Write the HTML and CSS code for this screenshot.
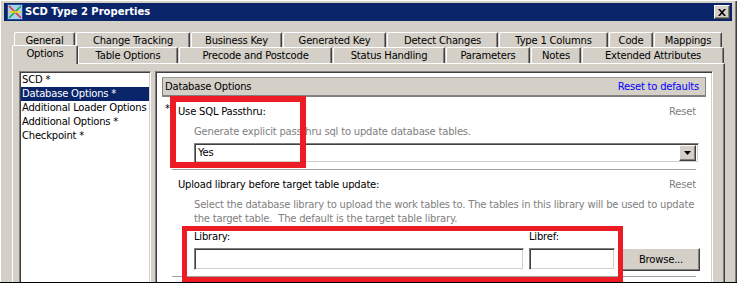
FILE: index.html
```html
<!DOCTYPE html>
<html lang="en">
  <head>
    <meta charset="UTF-8" />
    <title>SCD Type 2 Properties</title>
    <link rel="stylesheet" href="styles.css">
  </head>
  <body>
    <div class="window">
      <div class="titlebar">
        <svg class="app-icon" viewBox="0 0 16 16">
          <rect x="0.5" y="0.5" width="15" height="15" fill="#a8cff2" stroke="#1d4f9c" />
          <path d="M2 2 L14 14" stroke="#e0352a" stroke-width="1.6" />
          <path d="M2 14 L14 2" stroke="#1fa848" stroke-width="1.6" />
          <path d="M1.5 8 H14.5" stroke="#f2d21c" stroke-width="1.6" />
        </svg>
        <span class="title">SCD Type 2 Properties</span>
        <span class="close">
          <svg viewBox="0 0 8 7" width="8" height="7">
            <path d="M0 0 H2 L4 2.3 L6 0 H8 L5 3.5 L8 7 H6 L4 4.7 L2 7 H0 L3 3.5 Z" fill="#000" />
          </svg>
        </span>
      </div>

      <div class="tabs">
        <div class="tab-row back">
          <div class="tab" style="width: 61px">General</div>
          <div class="tab" style="width: 114px">Change Tracking</div>
          <div class="tab" style="width: 91px">Business Key</div>
          <div class="tab" style="width: 103px">Generated Key</div>
          <div class="tab" style="width: 111px">Detect Changes</div>
          <div class="tab" style="width: 109px">Type 1 Columns</div>
          <div class="tab" style="width: 44px">Code</div>
          <div class="tab" style="width: 68px">Mappings</div>
        </div>
        <div class="tab-row front">
          <div class="tab sel" style="width: 66px">Options</div>
          <div class="tab" style="width: 100px">Table Options</div>
          <div class="tab" style="width: 153px">Precode and Postcode</div>
          <div class="tab" style="width: 112px">Status Handling</div>
          <div class="tab" style="width: 84px">Parameters</div>
          <div class="tab" style="width: 50px">Notes</div>
          <div class="tab" style="width: 142px">Extended Attributes</div>
        </div>
      </div>

      <div class="panel">
        <ul class="nav-list">
          <li>SCD *</li>
          <li class="active">Database Options *</li>
          <li>Additional Loader Options</li>
          <li>Additional Options *</li>
          <li>Checkpoint *</li>
        </ul>

        <div class="content">
          <div class="section-head">
            <span>Database Options</span>
            <span class="link">Reset to defaults</span>
          </div>

          <div class="option first">
            <div class="opt-head">
              <span class="req">*</span>
              <span class="opt-name">Use SQL Passthru:</span>
              <span class="reset">Reset</span>
            </div>
            <div class="desc">Generate explicit passthru sql to update database tables.</div>
            <div class="combo">
              <span class="combo-value">Yes</span>
              <span class="combo-btn">
                <svg viewBox="0 0 7 4" width="7" height="4"><path d="M0 0 H7 L3.5 4 Z" fill="#000" /></svg>
              </span>
            </div>
          </div>
          <div class="sep"></div>

          <div class="option">
            <div class="opt-head">
              <span class="req"></span>
              <span class="opt-name">Upload library before target table update:</span>
              <span class="reset">Reset</span>
            </div>
            <div class="desc">Select the database library to upload the work tables to. The tables in this library will be used to update<br>the target table.&nbsp; The default is the target table library.</div>
            <div class="lib-row">
              <label class="field lib">
                <span>Library:</span>
                <span class="input"></span>
              </label>
              <label class="field libref">
                <span>Libref:</span>
                <span class="input"></span>
              </label>
              <span class="btn">Browse...</span>
            </div>
          </div>
          <div class="sep"></div>
        </div>
      </div>

      <div class="mark mark-1"></div>
      <div class="mark mark-2"></div>
    </div>
  </body>
</html>
```

FILE: styles.css
```css
:root {
  --face: #d4d0c8;
  --shadow: #808080;
  --dark: #404040;
  --navy: #0a246a;
  --mark: #ed1c24;
}
body {
  margin: 0;
  width: 737px;
  height: 283px;
  overflow: hidden;
  background: var(--face);
  font-family: "DejaVu Sans", sans-serif;
  font-size: 10px;
  line-height: 14px;
  letter-spacing: -0.2px;
  color: #000;
}
.window {
  position: relative;
  height: 283px;
  box-sizing: border-box;
  padding: 3px 5px 0 4px;
  border-bottom: 1px solid #000;
  box-shadow: inset 1px 1px #fff, inset -1px 0 var(--dark), inset -2px 0 var(--shadow);
  overflow: hidden;
}

/* title bar */
.titlebar {
  display: flex;
  align-items: center;
  height: 18px;
  padding: 0 2px 0 3px;
  background: var(--navy);
  color: #fff;
}
.app-icon {
  width: 16px;
  height: 16px;
  margin-right: 2px;
}
.title {
  flex: 1;
  font-weight: bold;
  letter-spacing: 0;
}
.close {
  display: flex;
  align-items: center;
  justify-content: center;
  width: 16px;
  height: 14px;
  box-sizing: border-box;
  background: var(--face);
  border: 1px solid;
  border-color: #fff var(--dark) var(--dark) #fff;
  box-shadow: inset -1px -1px var(--shadow);
}

/* tabs */
.tabs {
  margin: 11px 0 0 8px;
}
.tab-row {
  display: flex;
}
.tab-row.back {
  height: 15px;
  padding-left: 2px;
}
.tab-row.front {
  height: 16px;
  align-items: flex-end;
}
.tab {
  flex: none;
  box-sizing: border-box;
  height: 16px;
  margin-right: 1px;
  background: var(--face);
  border: 1px solid #fff;
  border-right-color: var(--dark);
  border-bottom: none;
  border-radius: 2px 2px 0 0;
  box-shadow: inset -1px 0 var(--shadow);
  text-align: center;
  line-height: 15px;
  white-space: nowrap;
}
.tab-row.back .tab {
  height: 15px;
  padding-top: 1px;
  line-height: 14px;
}
.tab.sel {
  position: relative;
  z-index: 1;
  height: 19px;
  margin-right: 0;
  margin-bottom: -1px;
}

/* panel */
.panel {
  display: flex;
  gap: 4px;
  width: 713px;
  height: 230px;
  margin-left: 8px;
  box-sizing: border-box;
  padding: 7px 11px 0 6px;
  border: 1px solid #fff;
  border-right-color: var(--dark);
  border-bottom: none;
  box-shadow: inset -1px 0 var(--shadow);
}
.nav-list,
.content,
.combo,
.input {
  box-sizing: border-box;
  background: #fff;
  border: 1px solid;
  border-color: var(--shadow) #fff #fff var(--shadow);
  box-shadow: inset 1px 1px var(--dark), inset -1px -1px var(--face);
}
.nav-list {
  width: 132px;
  flex: none;
  margin: 0;
  padding: 1px 1px 0;
  list-style: none;
  white-space: nowrap;
}
.nav-list li {
  height: 14px;
  padding-left: 1px;
}
.nav-list li.active {
  background: var(--navy);
  color: #fff;
}
.content {
  flex: 1;
  padding: 5px 6px 0 6px;
}

.section-head {
  display: flex;
  justify-content: space-between;
  align-items: center;
  height: 20px;
  box-sizing: border-box;
  padding: 0 6px 0 2px;
  background: var(--face);
  border: 1px solid var(--shadow);
  border-bottom-width: 2px;
  border-top-color: #9a9a9a;
}
.link {
  color: #0000ff;
}

.option .opt-head {
  display: flex;
  margin-top: 8px;
  padding-right: 10px;
  white-space: nowrap;
}
.req {
  width: 16px;
  box-sizing: border-box;
  padding-left: 3px;
  margin-top: -3px;
}
.opt-name {
  flex: 1;
}
.reset,
.desc {
  color: var(--shadow);
}
.desc {
  margin-top: 6px;
  padding-left: 32px;
  white-space: nowrap;
}
.combo {
  display: flex;
  align-items: center;
  justify-content: space-between;
  height: 20px;
  margin: 4px 7px 0 32px;
  padding: 2px;
}
.combo-value {
  padding-left: 1px;
}
.combo-btn,
.btn {
  display: flex;
  align-items: center;
  justify-content: center;
  box-sizing: border-box;
  background: var(--face);
  border: 1px solid;
  border-color: #fff var(--dark) var(--dark) #fff;
  box-shadow: inset -1px -1px var(--shadow);
}
.combo-btn {
  width: 17px;
  height: 16px;
}
.sep {
  height: 1px;
  margin: 6px 10px 0;
  background: #a0a0a0;
}

.lib-row {
  display: flex;
  align-items: flex-end;
  gap: 5px;
  margin-top: 4px;
  padding-left: 32px;
}
.field {
  display: flex;
  flex: none;
  flex-direction: column;
  gap: 4px;
}
.field.lib {
  width: 330px;
}
.field.libref {
  width: 86px;
  margin-right: 2px;
}
.input {
  height: 22px;
}
.btn {
  flex: none;
  width: 78px;
  height: 23px;
  margin-bottom: -1px;
}

/* red annotation frames */
.mark {
  position: absolute;
  box-sizing: border-box;
  border: 6px solid var(--mark);
}
.mark-1 {
  left: 170px;
  top: 96px;
  width: 136px;
  height: 72px;
}
.mark-2 {
  left: 182px;
  top: 226px;
  width: 441px;
  height: 56px;
  border-width: 5px;
}
```
